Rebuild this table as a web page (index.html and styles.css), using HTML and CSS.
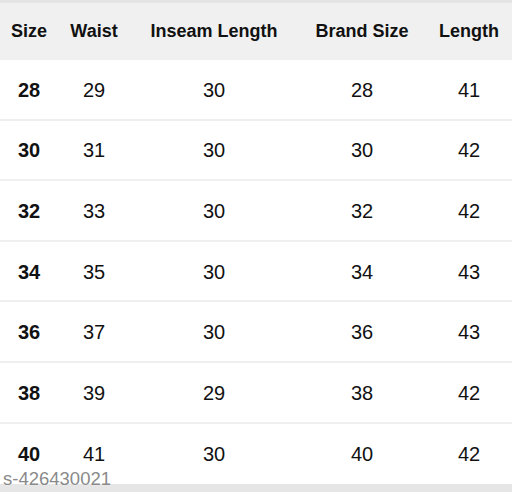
FILE: index.html
```html
<!DOCTYPE html>
<html>
<head>
<meta charset="utf-8">
<link rel="stylesheet" href="styles.css">
</head>
<body>
<div class="page">
  <div class="top-strip"></div>
  <div class="row head">
    <div>Size</div><div>Waist</div><div>Inseam Length</div><div>Brand Size</div><div>Length</div>
  </div>
  <div class="row"><div class="b">28</div><div>29</div><div>30</div><div>28</div><div>41</div></div>
  <div class="row"><div class="b">30</div><div>31</div><div>30</div><div>30</div><div>42</div></div>
  <div class="row"><div class="b">32</div><div>33</div><div>30</div><div>32</div><div>42</div></div>
  <div class="row"><div class="b">34</div><div>35</div><div>30</div><div>34</div><div>43</div></div>
  <div class="row"><div class="b">36</div><div>37</div><div>30</div><div>36</div><div>43</div></div>
  <div class="row"><div class="b">38</div><div>39</div><div>29</div><div>38</div><div>42</div></div>
  <div class="row last"><div class="b">40</div><div>41</div><div>30</div><div>40</div><div>42</div></div>
  <div class="bottom-strip"></div>
  <div class="watermark">s-426430021</div>
</div>
</body>
</html>
```

FILE: styles.css
```css
html, body {
  margin: 0;
  padding: 0;
  background: #ffffff;
}
.page {
  position: relative;
  width: 512px;
  height: 492px;
  overflow: hidden;
  font-family: "Liberation Sans", Arial, sans-serif;
  color: #111;
}
.top-strip {
  height: 3px;
  background: #e4e4e4;
}
.row {
  display: grid;
  grid-template-columns: 58px 72px 168px 128px 86px;
  height: 60.6px;
  box-sizing: border-box;
  border-bottom: 2px solid #efefef;
  align-items: center;
  font-size: 20px;
  padding-top: 2px;
}
.row > div {
  text-align: center;
}
.row.head {
  height: 57px;
  background: #f0f0f0;
  border-bottom: none;
  font-size: 18px;
  font-weight: bold;
  padding-top: 0;
  padding-bottom: 0;
}
.row.last {
  border-bottom: none;
  height: 60px;
}
.b {
  font-weight: bold;
}
.bottom-strip {
  height: 8px;
  background: #e6e6e6;
}
.watermark {
  position: absolute;
  left: 3px;
  top: 468px;
  font-size: 18.5px;
  color: #8a8a8a;
  text-shadow: 0 0 1px #ffffff;
}
```
